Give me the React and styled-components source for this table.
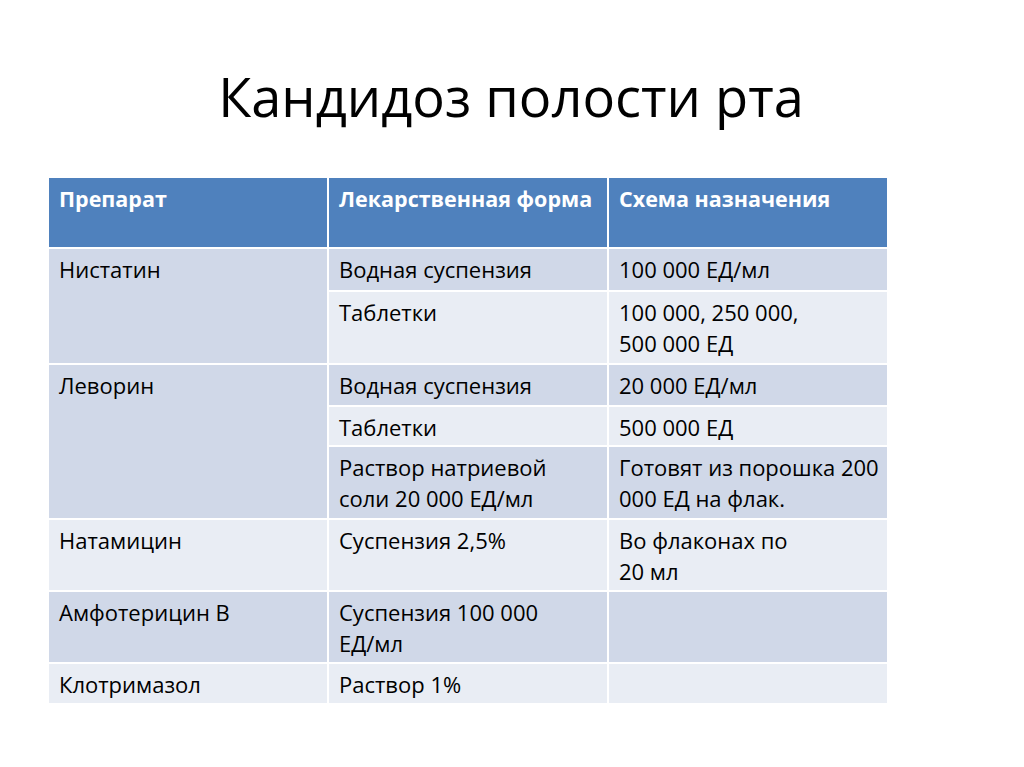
import styled, { createGlobalStyle } from "styled-components";

const GlobalStyle = createGlobalStyle`
  html, body {
    margin: 0;
    padding: 0;
    background: #ffffff;
  }
  body {
    font-family: "Open Sans", "Noto Sans", "Liberation Sans", sans-serif;
    color: #000000;
  }
`;

const Slide = styled.div`
  width: 1024px;
  height: 767px;
  background: #ffffff;
  display: flex;
  flex-direction: column;
  align-items: center;
  overflow: hidden;
`;

const Title = styled.h1`
  margin: 59px 0 0 -2px;
  font-size: 54.2px;
  font-weight: 400;
  line-height: 74px;
  color: #000000;
`;

const Table = styled.div`
  margin: 45px 0 0 -88px;
  display: grid;
  grid-template-columns: 278px 278px 278px;
  grid-template-rows: 69px 41px 71px 40px 38px 71px 70px 70px 39px;
  gap: 2px;
`;

const Cell = styled.div`
  grid-column: ${(p) => p.$col};
  grid-row: ${(p) => p.$row};
  background: ${(p) => (p.$head ? "#4f81bd" : p.$dark ? "#d0d8e8" : "#e9edf4")};
  color: ${(p) => (p.$head ? "#ffffff" : "#000000")};
  font-weight: ${(p) => (p.$head ? 700 : 400)};
  font-size: ${(p) => (p.$head ? "21.5px" : "22px")};
  line-height: 31px;
  padding: 5px 10px 0;
  box-sizing: border-box;
  white-space: nowrap;
`;

const rows = [
  { col: 1, row: "2 / 4", text: ["Нистатин"], dark: true },
  { col: 2, row: "2", text: ["Водная суспензия"], dark: true },
  { col: 3, row: "2", text: ["100 000 ЕД/мл"], dark: true },
  { col: 2, row: "3", text: ["Таблетки"] },
  { col: 3, row: "3", text: ["100 000, 250 000,", "500 000 ЕД"] },
  { col: 1, row: "4 / 7", text: ["Леворин"], dark: true },
  { col: 2, row: "4", text: ["Водная суспензия"], dark: true },
  { col: 3, row: "4", text: ["20 000 ЕД/мл"], dark: true },
  { col: 2, row: "5", text: ["Таблетки"] },
  { col: 3, row: "5", text: ["500 000 ЕД"] },
  { col: 2, row: "6", text: ["Раствор натриевой", "соли 20 000 ЕД/мл"], dark: true },
  { col: 3, row: "6", text: ["Готовят из порошка 200", "000 ЕД на флак."], dark: true },
  { col: 1, row: "7", text: ["Натамицин"] },
  { col: 2, row: "7", text: ["Суспензия 2,5%"] },
  { col: 3, row: "7", text: ["Во флаконах по", "20 мл"] },
  { col: 1, row: "8", text: ["Амфотерицин В"], dark: true },
  { col: 2, row: "8", text: ["Суспензия 100 000", "ЕД/мл"], dark: true },
  { col: 3, row: "8", text: [], dark: true },
  { col: 1, row: "9", text: ["Клотримазол"] },
  { col: 2, row: "9", text: ["Раствор 1%"] },
  { col: 3, row: "9", text: [] },
];

const heads = ["Препарат", "Лекарственная форма", "Схема назначения"];

export default function App() {
  return (
    <>
      <GlobalStyle />
      <Slide>
        <Title>Кандидоз полости рта</Title>
        <Table>
          {heads.map((h, i) => (
            <Cell key={h} $head $col={i + 1} $row="1">
              {h}
            </Cell>
          ))}
          {rows.map((c, i) => (
            <Cell key={i} $col={c.col} $row={c.row} $dark={c.dark}>
              {c.text.map((line, j) => (
                <div key={j}>{line}</div>
              ))}
            </Cell>
          ))}
        </Table>
      </Slide>
    </>
  );
}
